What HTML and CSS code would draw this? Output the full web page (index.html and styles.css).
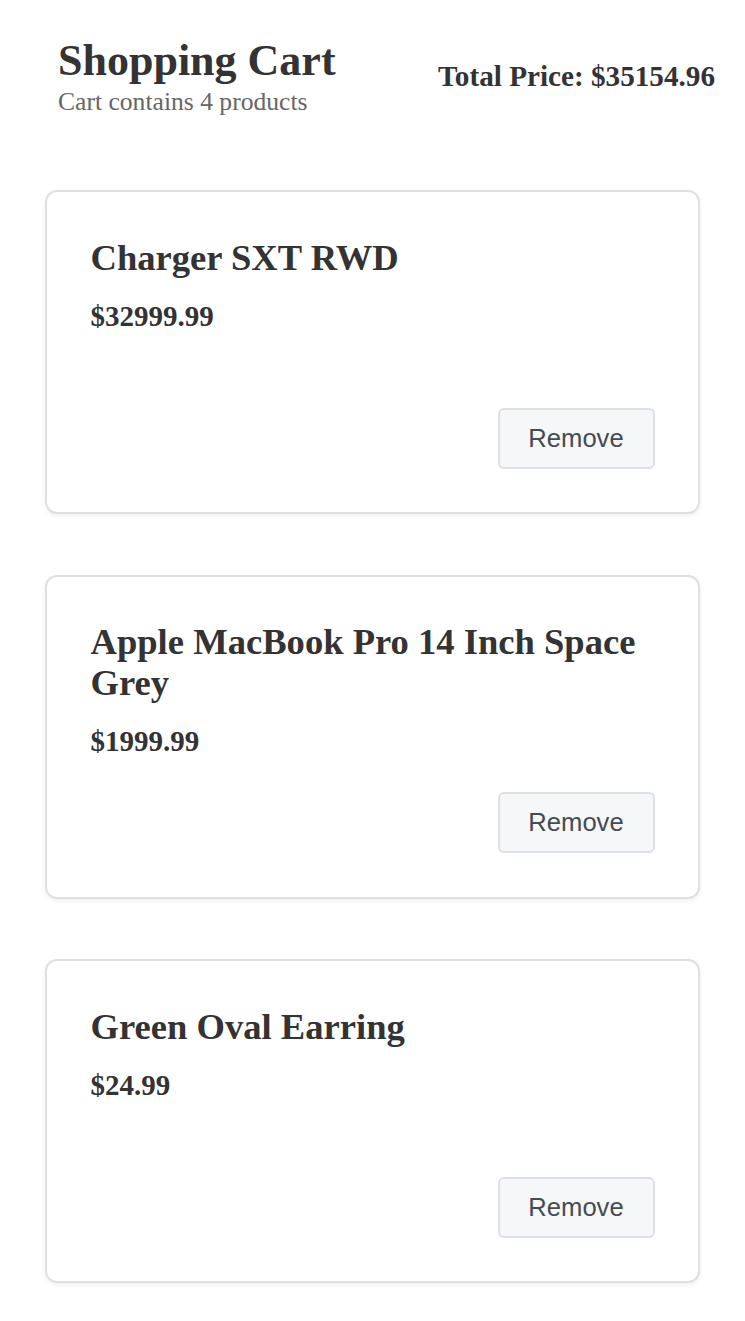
FILE: index.html
```html
<!DOCTYPE html>
<html lang="en">
<head>
<meta charset="utf-8">
<title>Shopping Cart</title>
<link rel="stylesheet" href="styles.css">
</head>
<body>
<div class="page">
  <header class="cart-header">
    <div class="heading">
      <h1 class="title">Shopping Cart</h1>
      <p class="subtitle">Cart contains 4 products</p>
    </div>
    <h2 class="total">Total Price: $35154.96</h2>
  </header>
  <main class="cart-list">
    <article class="card">
      <h3 class="name">Charger SXT RWD</h3>
      <p class="price">$32999.99</p>
      <button class="remove" type="button">Remove</button>
    </article>
    <article class="card">
      <h3 class="name">Apple MacBook Pro 14 Inch Space Grey</h3>
      <p class="price">$1999.99</p>
      <button class="remove" type="button">Remove</button>
    </article>
    <article class="card">
      <h3 class="name">Green Oval Earring</h3>
      <p class="price">$24.99</p>
      <button class="remove" type="button">Remove</button>
    </article>
  </main>
</div>
</body>
</html>
```
FILE: styles.css
```css
* { box-sizing: border-box; }
html, body { margin: 0; padding: 0; background: #ffffff; }
body {
  font-family: "Liberation Serif", "Times New Roman", serif;
  color: #333333;
}
.page { width: 745px; }
.cart-header {
  display: flex;
  justify-content: space-between;
  align-items: flex-start;
  padding: 39px 30px 0 58px;
}
.title {
  margin: 0;
  font-size: 44px;
  line-height: 44px;
  font-weight: 700;
  color: #333333;
}
.subtitle {
  margin: 4px 0 0;
  font-size: 25.6px;
  line-height: 30px;
  color: #666666;
}
.total {
  margin: 20px 0 0;
  font-size: 29.2px;
  line-height: 34px;
  font-weight: 700;
  color: #333333;
}
.cart-list {
  display: flex;
  flex-direction: column;
  gap: 60.5px;
  padding: 0 45px 40px;
  margin-top: 73px;
}
.card {
  height: 324px;
  display: flex;
  flex-direction: column;
  align-items: flex-start;
  padding: 44.5px 43.5px 43.5px 43.5px;
  border: 2px solid #e0e0e0;
  border-radius: 12px;
  box-shadow: 0 2px 5px rgba(0, 0, 0, 0.06);
  background: #ffffff;
}
.name {
  margin: 0;
  font-size: 36.6px;
  line-height: 41px;
  font-weight: 700;
  color: #333333;
}
.price {
  margin: 21px 0 0;
  font-size: 29px;
  line-height: 34px;
  font-weight: 700;
  color: #333333;
}
.remove {
  margin-top: auto;
  align-self: flex-end;
  width: 157px;
  height: 61px;
  padding: 0;
  font-family: "Liberation Sans", Arial, sans-serif;
  font-size: 25.6px;
  color: #454b52;
  background: #f6f7f9;
  border: 2px solid #dcdfe4;
  border-radius: 6px;
}
```
